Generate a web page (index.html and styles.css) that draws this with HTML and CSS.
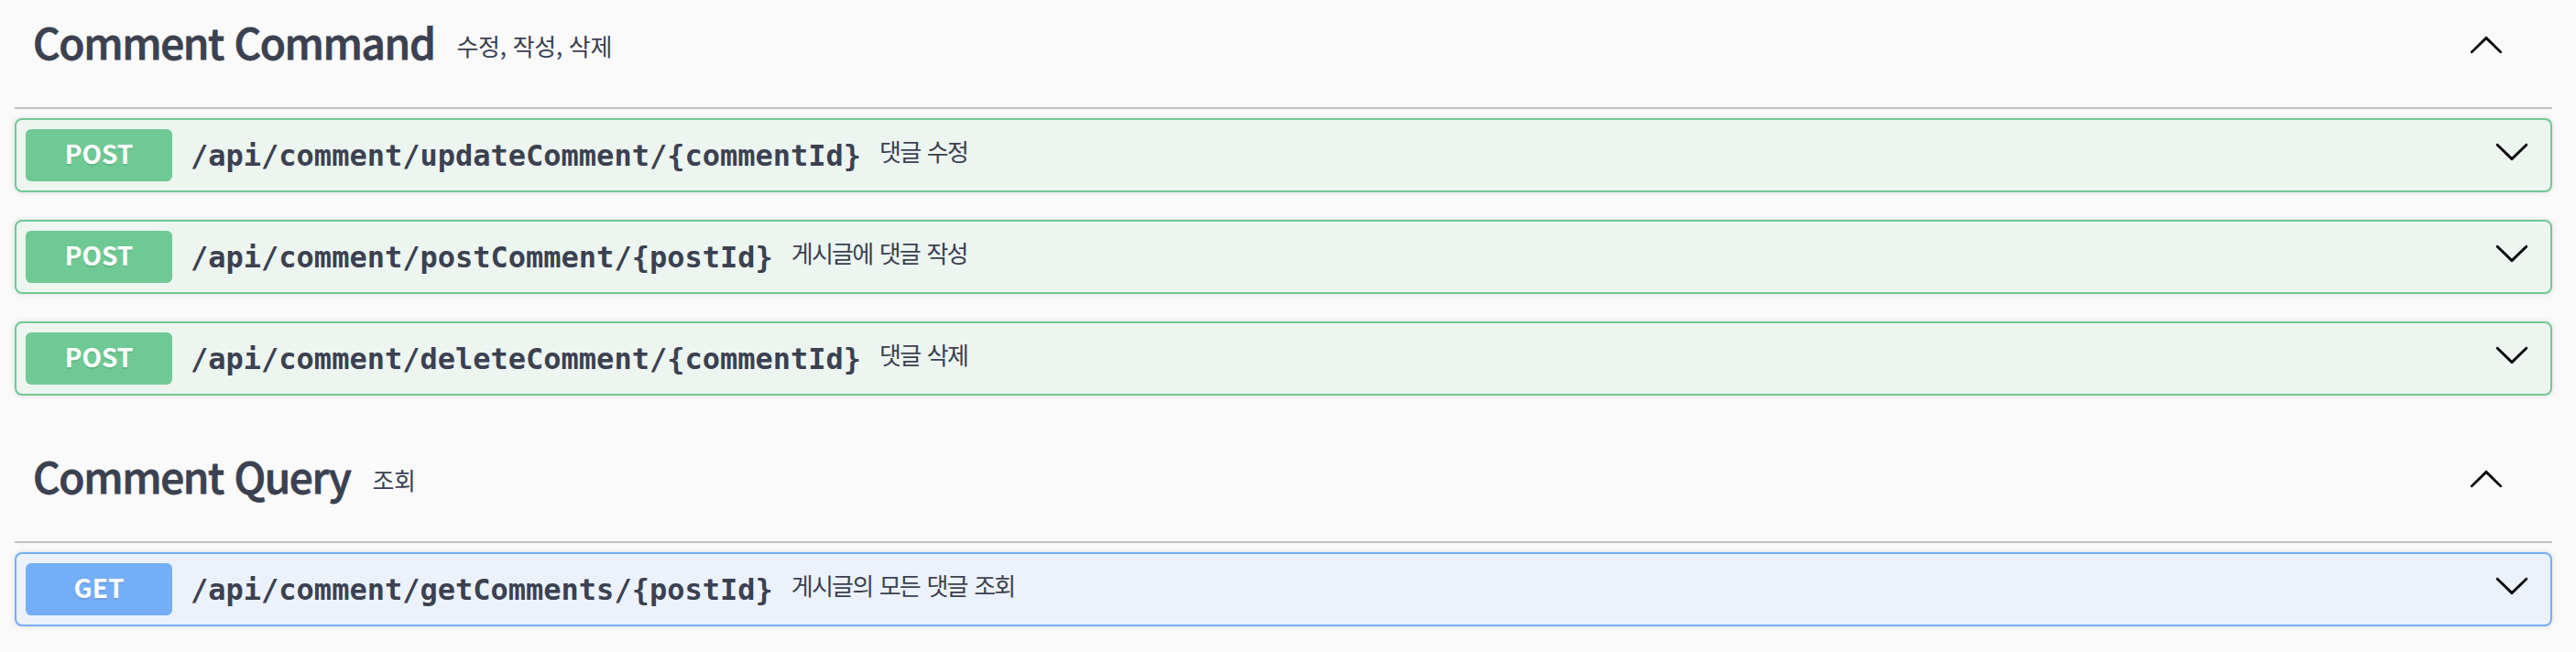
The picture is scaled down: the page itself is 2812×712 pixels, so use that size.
FILE: index.html
```html
<!DOCTYPE html>
<html lang="ko">
<head>
<meta charset="utf-8">
<title>Comment API</title>
<link rel="stylesheet" href="styles.css">
</head>
<body>
<div class="page">
  <section class="tag-section">
    <h3 class="tag">
      <span class="tag-name">Comment Command</span>
      <small class="tag-desc">수정, 작성, 삭제</small>
      <button class="expand" aria-label="collapse">
        <svg viewBox="0 0 20 20" width="40" height="40"><path d="M17.418 14.908c.272.268.709.268.979 0s.271-.701 0-.969l-7.908-7.830c-.27-.268-.707-.268-.979 0l-7.908 7.830c-.27.268-.27.701 0 .969.271.268.709.268.979 0L10 7.767l7.418 7.141z"/></svg>
      </button>
    </h3>
    <div class="opblock post">
      <div class="summary">
        <span class="method">POST</span>
        <span class="path">/api/comment/updateComment/{commentId}</span>
        <span class="desc">댓글 수정</span>
        <button class="arrow" aria-label="expand">
          <svg viewBox="0 0 20 20" width="40" height="40"><path d="M17.418 6.109c.272-.268.709-.268.979 0s.271.701 0 .969l-7.908 7.83c-.27.268-.707.268-.979 0l-7.908-7.83c-.27-.268-.27-.701 0-.969.271-.268.709-.268.979 0L10 13.25l7.418-7.141z"/></svg>
        </button>
      </div>
    </div>
    <div class="opblock post">
      <div class="summary">
        <span class="method">POST</span>
        <span class="path">/api/comment/postComment/{postId}</span>
        <span class="desc">게시글에 댓글 작성</span>
        <button class="arrow" aria-label="expand">
          <svg viewBox="0 0 20 20" width="40" height="40"><path d="M17.418 6.109c.272-.268.709-.268.979 0s.271.701 0 .969l-7.908 7.83c-.27.268-.707.268-.979 0l-7.908-7.83c-.27-.268-.27-.701 0-.969.271-.268.709-.268.979 0L10 13.25l7.418-7.141z"/></svg>
        </button>
      </div>
    </div>
    <div class="opblock post">
      <div class="summary">
        <span class="method">POST</span>
        <span class="path">/api/comment/deleteComment/{commentId}</span>
        <span class="desc">댓글 삭제</span>
        <button class="arrow" aria-label="expand">
          <svg viewBox="0 0 20 20" width="40" height="40"><path d="M17.418 6.109c.272-.268.709-.268.979 0s.271.701 0 .969l-7.908 7.83c-.27.268-.707.268-.979 0l-7.908-7.83c-.27-.268-.27-.701 0-.969.271-.268.709-.268.979 0L10 13.25l7.418-7.141z"/></svg>
        </button>
      </div>
    </div>
  </section>
  <section class="tag-section">
    <h3 class="tag">
      <span class="tag-name">Comment Query</span>
      <small class="tag-desc">조회</small>
      <button class="expand" aria-label="collapse">
        <svg viewBox="0 0 20 20" width="40" height="40"><path d="M17.418 14.908c.272.268.709.268.979 0s.271-.701 0-.969l-7.908-7.830c-.27-.268-.707-.268-.979 0l-7.908 7.830c-.27.268-.27.701 0 .969.271.268.709.268.979 0L10 7.767l7.418 7.141z"/></svg>
      </button>
    </h3>
    <div class="opblock get">
      <div class="summary">
        <span class="method">GET</span>
        <span class="path">/api/comment/getComments/{postId}</span>
        <span class="desc">게시글의 모든 댓글 조회</span>
        <button class="arrow" aria-label="expand">
          <svg viewBox="0 0 20 20" width="40" height="40"><path d="M17.418 6.109c.272-.268.709-.268.979 0s.271.701 0 .969l-7.908 7.83c-.27.268-.707.268-.979 0l-7.908-7.83c-.27-.268-.27-.701 0-.969.271-.268.709-.268.979 0L10 13.25l7.418-7.141z"/></svg>
        </button>
      </div>
    </div>
  </section>
</div>
</body>
</html>
```

FILE: styles.css
```css
html, body {
  margin: 0;
  padding: 0;
  background: #fafafa;
}

body {
  font-family: "Noto Sans CJK KR", "Noto Sans", sans-serif;
  color: #3b4151;
  overflow: hidden;
}

.page {
  margin-top: -12px;
  padding: 0 26px 0 16px;
}

.tag-section {
  display: flex;
  flex-direction: column;
}

.tag {
  display: flex;
  align-items: center;
  box-sizing: border-box;
  height: 131px;
  margin: 0 0 10px;
  padding: 0 52px 10px 20px;
  border-bottom: 2px solid rgba(59, 65, 81, 0.3);
  font-weight: normal;
}

.tag-name {
  font-size: 46px;
  font-weight: 500;
  line-height: 1;
  letter-spacing: -1.4px;
  -webkit-text-stroke: 0.8px #3b4151;
  margin-bottom: 6px;
  color: #3b4151;
}

.tag-desc {
  font-size: 26px;
  line-height: 1;
  margin: 5px 0 0 24px;
  letter-spacing: -0.3px;
  color: #3b4151;
}

.expand,
.arrow {
  display: flex;
  align-items: center;
  justify-content: center;
  margin-left: auto;
  padding: 0;
  border: none;
  background: none;
  width: 40px;
  height: 40px;
}

.expand svg,
.arrow svg {
  display: block;
  fill: #000;
}

.opblock {
  margin: 0 0 30px;
  border: 2px solid #6fc895;
  border-radius: 8px;
  box-shadow: 0 0 6px rgba(0, 0, 0, 0.12);
}

.opblock.post {
  background: #ecf5f0;
  border-color: #70c995;
}

.opblock.get {
  background: #ebf2fb;
  border-color: #74aef6;
}

.summary {
  display: flex;
  align-items: center;
  padding: 10px;
}

.method {
  display: flex;
  align-items: center;
  justify-content: center;
  box-sizing: border-box;
  min-width: 160px;
  height: 57px;
  padding-bottom: 6px;
  border-radius: 6px;
  font-size: 28px;
  font-weight: 700;
  line-height: 1;
  color: #fff;
  text-shadow: 0 2px 0 rgba(0, 0, 0, 0.1);
}

.post .method {
  background: #6fc994;
}

.get .method {
  background: #74aef7;
}

.path {
  padding: 0 20px;
  font-family: "DejaVu Sans Mono", monospace;
  font-size: 32px;
  font-weight: 700;
  color: #3b4151;
}

.desc {
  font-size: 26px;
  line-height: 1;
  letter-spacing: -1.8px;
  word-spacing: 2px;
  margin-bottom: 9px;
  color: #3b4151;
}

.arrow {
  margin-right: 12px;
  margin-bottom: 10px;
}
```
